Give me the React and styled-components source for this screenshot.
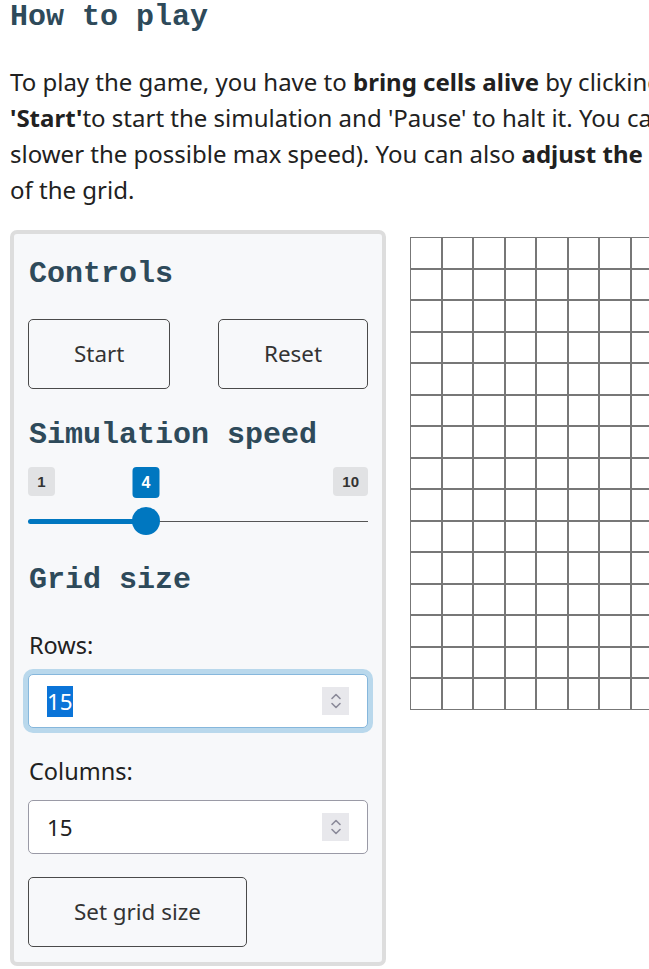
import React from 'react'
import styled, { createGlobalStyle } from 'styled-components'

const GlobalStyle = createGlobalStyle`
  body {
    margin: 0;
    overflow: hidden;
    background: #fff;
    font-family: "Noto Sans", "Open Sans", sans-serif;
    color: #212121;
  }
`

const ROWS = 15
const COLS = 15
const TEXT = '24px'
const CONTROL_TEXT = '22.4px'

function Spinner() {
    return (
        <SpinBox>
            <svg width="12" height="18" viewBox="0 0 12 18" fill="none" stroke="#8b8a99" strokeWidth="1.6" strokeLinecap="round" strokeLinejoin="round">
                <polyline points="2,6.5 6,2.5 10,6.5" />
                <polyline points="2,11.5 6,15.5 10,11.5" />
            </svg>
        </SpinBox>
    )
}

function NumberField({ value, focused }) {
    return (
        <Field focused={focused}>
            <FieldValue selected={focused}>{value}</FieldValue>
            <Spinner />
        </Field>
    )
}

function App() {
    const cells = []
    for (let i = 0; i < ROWS * COLS; i++) cells.push(<Cell key={i} />)

    const min = 1
    const max = 10
    const speed = 4
    const thumb = 28
    const pct = (speed - min) / (max - min)
    const pos = `calc(${thumb / 2}px + ${pct} * (100% - ${thumb}px))`

    return (
        <Page>
            <GlobalStyle />
            <Title>How to play</Title>
            <Intro>
                To play the game, you have to <b>bring cells alive</b> by clicking on them in the grid. Press<br />
                <b>'Start'</b>to start the simulation and 'Pause' to halt it. You can change the speed (the higher the number, the<br />
                slower the possible max speed). You can also <b>adjust the size</b> by changing the number of rows and columns<br />
                of the grid.
            </Intro>
            <Main>
                <Panel>
                    <Heading>Controls</Heading>
                    <ButtonRow>
                        <Button>Start</Button>
                        <Button>Reset</Button>
                    </ButtonRow>
                    <Heading top={29}>Simulation speed</Heading>
                    <Slider>
                        <Badges>
                            <Badge>1</Badge>
                            <Badge>10</Badge>
                            <Badge active style={{ left: pos }}>{speed}</Badge>
                        </Badges>
                        <Track>
                            <Fill style={{ width: pos }} />
                            <Thumb style={{ left: pos }} />
                        </Track>
                    </Slider>
                    <Heading top={27}>Grid size</Heading>
                    <Label>Rows:</Label>
                    <NumberField value="15" focused />
                    <Label>Columns:</Label>
                    <NumberField value="15" />
                    <Button wide>Set grid size</Button>
                </Panel>
                <Board>{cells}</Board>
            </Main>
        </Page>
    )
}

export default App

const Page = styled.div`
  width: 1100px;
  padding: 0 10px;
`
const Title = styled.h2`
  font-family: "Liberation Mono", "Courier New", monospace;
  font-size: 30px;
  font-weight: bold;
  color: #2e4a5a;
  margin: 0;
  line-height: 34px;
`
const Intro = styled.p`
  font-size: ${TEXT};
  line-height: 36px;
  margin: 30px 0 22px;
  white-space: nowrap;
  b {
    font-weight: 700;
  }
`
const Main = styled.div`
  display: flex;
  align-items: flex-start;
  gap: 24px;
`
const Panel = styled.div`
  width: 340px;
  flex-shrink: 0;
  border: 4px solid #dddddd;
  border-radius: 7px;
  background: #f7f8fa;
  padding: 14px 14px 15px;
`
const Heading = styled.h3`
  font-family: "Liberation Mono", "Courier New", monospace;
  font-size: 30px;
  font-weight: bold;
  color: #2e4a5a;
  line-height: 34px;
  margin: ${props => props.top || 9}px 0 0 1px;
`
const ButtonRow = styled.div`
  display: flex;
  justify-content: space-between;
  margin-top: 28px;
`
const Button = styled.button`
  font-family: "Noto Sans", "Open Sans", sans-serif;
  font-size: ${CONTROL_TEXT};
  line-height: 28px;
  color: #333;
  background: transparent;
  border: 1px solid #4a4a4a;
  border-radius: 5px;
  padding: 20px 45px;
  cursor: pointer;
  display: block;
  margin-top: ${props => props.wide ? 23 : 0}px;
`
const Slider = styled.div`
  margin-top: 15px;
`
const Badges = styled.div`
  position: relative;
  display: flex;
  justify-content: space-between;
  height: 31px;
`
const Badge = styled.span`
  display: inline-flex;
  align-items: center;
  justify-content: center;
  min-width: 27px;
  height: ${props => props.active ? 31 : 29}px;
  padding: 0 9px;
  box-sizing: border-box;
  border-radius: 4px;
  font-family: "Liberation Sans", Arial, sans-serif;
  font-weight: bold;
  font-size: ${props => props.active ? 16 : 15}px;
  background: ${props => props.active ? '#0077c0' : '#e1e2e4'};
  color: ${props => props.active ? '#fff' : '#333'};
  ${props => props.active && `
    position: absolute;
    top: 0;
    transform: translateX(-50%);
  `}
`
const Track = styled.div`
  position: relative;
  height: 29px;
  margin-top: 9px;
  &::before {
    content: "";
    position: absolute;
    left: 0;
    right: 0;
    top: 14px;
    height: 1px;
    background: #555;
  }
`
const Fill = styled.div`
  position: absolute;
  left: 0;
  top: 12px;
  height: 5px;
  border-radius: 3px;
  background: #0077c0;
`
const Thumb = styled.div`
  position: absolute;
  top: 0;
  width: 28px;
  height: 28px;
  border-radius: 50%;
  background: #0077c0;
  transform: translateX(-50%);
`
const Label = styled.div`
  font-size: 23.5px;
  line-height: 30px;
  color: #212121;
  margin: 33px 0 14px 1px;
  & + div + & {
    margin-top: 28px;
  }
`
const Field = styled.div`
  display: flex;
  align-items: center;
  justify-content: space-between;
  height: 52px;
  background: #fff;
  border: 1px solid ${props => props.focused ? '#86b7dc' : '#9a9aa6'};
  border-radius: 5px;
  padding: 0 18px 0 18px;
  box-shadow: ${props => props.focused ? '0 0 0 5px #b9d8ec' : 'none'};
`
const FieldValue = styled.span`
  font-size: ${CONTROL_TEXT};
  line-height: 31px;
  color: ${props => props.selected ? '#fff' : '#212121'};
  background: ${props => props.selected ? '#0a74d8' : 'transparent'};
`
const SpinBox = styled.div`
  width: 27px;
  height: 28px;
  background: #e8e8ec;
  display: flex;
  align-items: center;
  justify-content: center;
`
const Board = styled.div`
  display: grid;
  grid-template-columns: repeat(${COLS}, 31.5px);
  grid-auto-rows: 31.5px;
  margin-top: 7px;
  flex-shrink: 0;
`
const Cell = styled.div`
  border: 1px solid #777;
  background: #fff;
`
